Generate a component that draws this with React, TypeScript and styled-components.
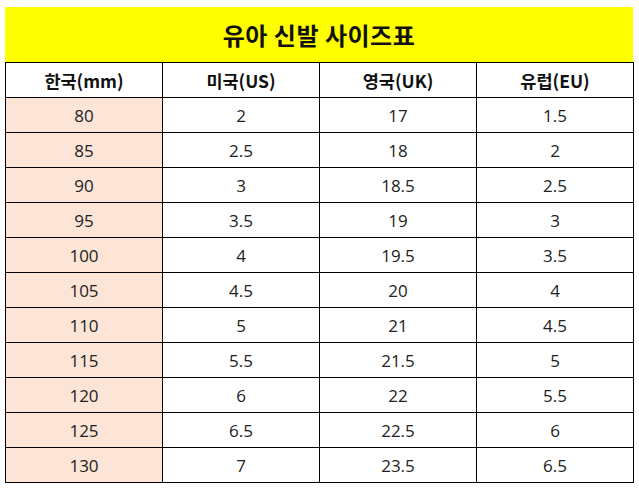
import { createGlobalStyle } from 'styled-components';
import styled from 'styled-components';

const GlobalStyle = createGlobalStyle`
  body {
    margin: 0;
    background: #fff;
    font-family: "Open Sans", "Noto Sans CJK KR", sans-serif;
  }
`;

const Wrapper = styled.div`
  padding: 7px 0 0 5px;
  width: 628px;
`;

const TitleBar = styled.div`
  height: 55px;
  background-color: #ffff00;
  display: flex;
  align-items: center;
  justify-content: center;
  font-family: "Noto Sans CJK KR", sans-serif;
  font-size: 24px;
  font-weight: 700;
  color: #111;
  letter-spacing: 0.5px;
`;

const Table = styled.table`
  width: 629px;
  border-collapse: collapse;
  table-layout: fixed;
`;

const HeadCell = styled.th`
  height: 34px;
  border: 1px solid #000;
  padding: 0;
  font-family: "Noto Sans CJK KR", sans-serif;
  font-size: 17.5px;
  font-weight: 700;
  color: #111;
  text-align: center;
`;

const Cell = styled.td<{ highlight?: boolean }>`
  height: 34px;
  border: 1px solid #000;
  padding: 0;
  font-size: 17px;
  color: #222;
  text-align: center;
  background-color: ${({ highlight }) => (highlight ? '#fce4d6' : '#fff')};
`;

const headers = ['한국(mm)', '미국(US)', '영국(UK)', '유럽(EU)'];

const rows = [
  ['80', '2', '17', '1.5'],
  ['85', '2.5', '18', '2'],
  ['90', '3', '18.5', '2.5'],
  ['95', '3.5', '19', '3'],
  ['100', '4', '19.5', '3.5'],
  ['105', '4.5', '20', '4'],
  ['110', '5', '21', '4.5'],
  ['115', '5.5', '21.5', '5'],
  ['120', '6', '22', '5.5'],
  ['125', '6.5', '22.5', '6'],
  ['130', '7', '23.5', '6.5'],
];

const App = () => (
  <>
    <GlobalStyle />
    <Wrapper>
      <TitleBar>유아 신발 사이즈표</TitleBar>
      <Table>
        <thead>
          <tr>
            {headers.map((h) => (
              <HeadCell key={h}>{h}</HeadCell>
            ))}
          </tr>
        </thead>
        <tbody>
          {rows.map((row, i) => (
            <tr key={i}>
              {row.map((v, j) => (
                <Cell key={j} highlight={j === 0}>
                  {v}
                </Cell>
              ))}
            </tr>
          ))}
        </tbody>
      </Table>
    </Wrapper>
  </>
);

export default App;
